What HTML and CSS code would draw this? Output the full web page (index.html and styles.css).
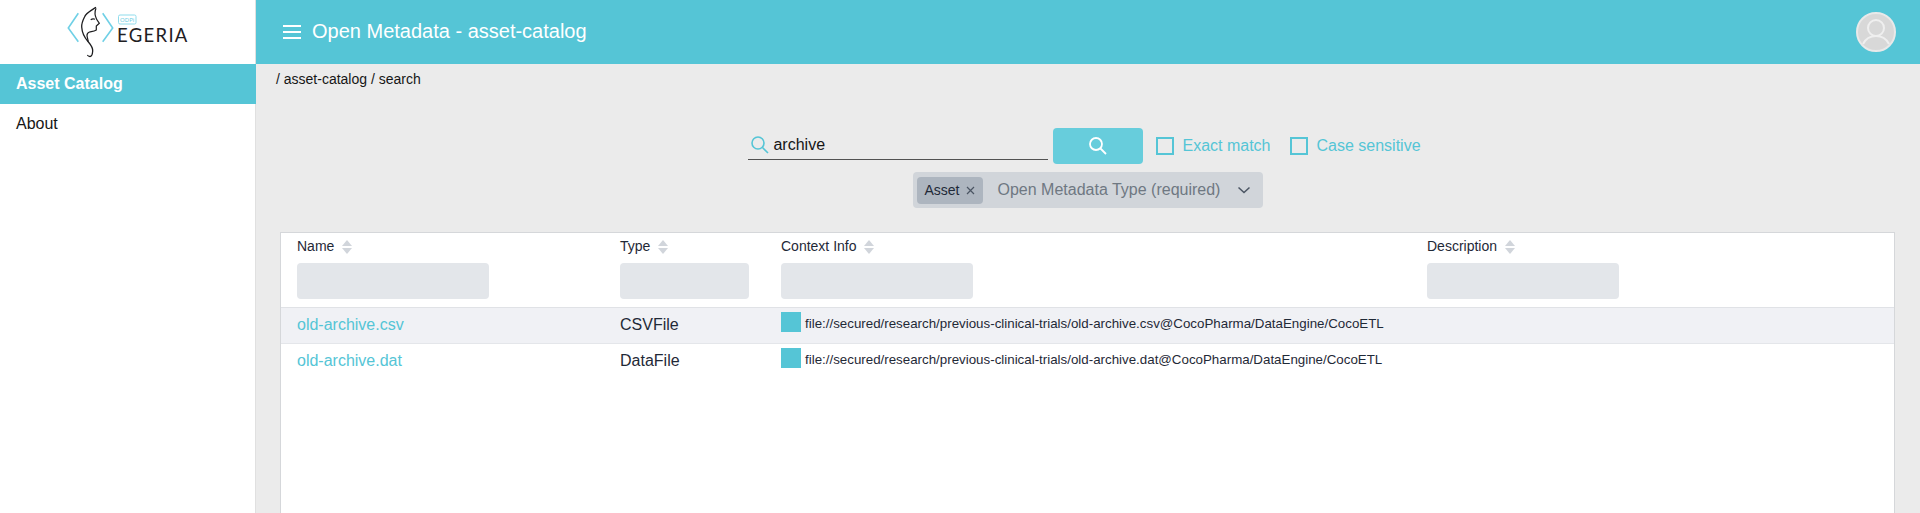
FILE: index.html
```html
<!DOCTYPE html>
<html lang="en">
<head>
    <meta charset="UTF-8">
    <meta name="viewport" content="width=device-width, initial-scale=1.0">
    <title>Open Metadata - asset-catalog</title>
    <link rel="stylesheet" href="styles.css">
</head>
<body>
    <aside class="sidebar">
        <div class="logo">
            <svg class="logo-mark" width="160" height="64" viewBox="0 0 160 64">
                <path d="M28.300 13.300 L18.300 28 L28.300 41.700 M52.700 13.300 L62.700 28 L52.700 41.700" fill="none" stroke="#6fd0e6" stroke-width="1.600"/>
                <path d="M46 7.300 C40 11 36 13 34.500 17 C32.500 21 31.500 24 31.700 27 C32 32 34 37 38 41.500 C41 45 43 48 42.700 51 C42.500 54 41.500 56.500 40 56.500 C39 56.500 38 56 37.300 55" fill="none" stroke="#1d1d1f" stroke-width="1.300"/>
                <path d="M46 8.300 C44.500 12 45 16 46.500 19 C47.500 21 49 22.500 49.300 23.300 L46.300 26 L46.300 30 C44 31.500 41.500 31.500 39.500 32 C37.500 32.700 36.800 34 37 36 L38.300 41.700" fill="none" stroke="#1d1d1f" stroke-width="1.200"/>
                <path d="M40.700 19.800 C42 18.800 44 18.800 45 19.300" fill="none" stroke="#1d1d1f" stroke-width="1.100"/>
                <rect x="68.500" y="15" width="17.500" height="9" rx="1.500" fill="none" stroke="#8fdcec"/>
                <text x="77.200" y="21.700" class="logo-odpi" text-anchor="middle">ODPi</text>
                <text x="67" y="42" class="logo-name">EGERIA</text>
            </svg>
        </div>
        <a class="nav-item active">Asset Catalog</a>
        <a class="nav-item">About</a>
    </aside>

    <div class="content">
        <header class="topbar">
            <span class="burger"><i></i><i></i><i></i></span>
            <span class="topbar-title">Open Metadata - asset-catalog</span>
            <svg class="avatar" width="40" height="40" viewBox="0 0 40 40">
                <circle cx="20" cy="20" r="19" fill="#d8d8d8" stroke="#e9e9e9" stroke-width="2"/>
                <circle cx="20" cy="16" r="8" fill="none" stroke="#efefef" stroke-width="2"/>
                <path d="M7 32 C10 26 15 24 20 24 C25 24 30 26 33 32" fill="none" stroke="#efefef" stroke-width="2"/>
            </svg>
        </header>

        <main class="main">
            <div class="breadcrumb">/ asset-catalog / search</div>

            <div class="search-row">
                <div class="search-field">
                    <svg width="20" height="20" viewBox="0 0 20 20"><circle cx="8" cy="8" r="6" fill="none" stroke="#55c5d6" stroke-width="1.600"/><path d="M12.500 12.500 L18 18" stroke="#55c5d6" stroke-width="1.600"/></svg>
                    <span>archive</span>
                </div>
                <button class="search-btn">
                    <svg width="20" height="20" viewBox="0 0 20 20"><circle cx="8" cy="8" r="6" fill="none" stroke="#fff" stroke-width="1.800"/><path d="M12.500 12.500 L18 18" stroke="#fff" stroke-width="1.800"/></svg>
                </button>
                <label class="check"><i></i>Exact match</label>
                <label class="check last"><i></i>Case sensitive</label>
            </div>

            <div class="type-select">
                <span class="chip">Asset
                    <svg width="9" height="9" viewBox="0 0 9 9"><path d="M1 1 L8 8 M8 1 L1 8" stroke="#4b5563" stroke-width="1.200"/></svg>
                </span>
                <span class="placeholder">Open Metadata Type (required)</span>
                <svg width="14" height="8" viewBox="0 0 14 8"><path d="M1.500 1.500 L7 6.500 L12.500 1.500" fill="none" stroke="#4b5563" stroke-width="1.500"/></svg>
            </div>

            <section class="table">
                <div class="row head">
                    <div class="cell">
                        <span class="th">Name <em class="sort"></em></span>
                        <div class="filter"></div>
                    </div>
                    <div class="cell">
                        <span class="th">Type <em class="sort"></em></span>
                        <div class="filter short"></div>
                    </div>
                    <div class="cell">
                        <span class="th">Context Info <em class="sort"></em></span>
                        <div class="filter"></div>
                    </div>
                    <div class="cell">
                        <span class="th">Description <em class="sort"></em></span>
                        <div class="filter"></div>
                    </div>
                </div>
                <div class="row body odd">
                    <div class="cell"><a class="link">old-archive.csv</a></div>
                    <div class="cell">CSVFile</div>
                    <div class="cell context"><i class="swatch"></i><span>file://secured/research/previous-clinical-trials/old-archive.csv@CocoPharma/DataEngine/CocoETL</span></div>
                    <div class="cell"></div>
                </div>
                <div class="row body">
                    <div class="cell"><a class="link">old-archive.dat</a></div>
                    <div class="cell">DataFile</div>
                    <div class="cell context"><i class="swatch"></i><span>file://secured/research/previous-clinical-trials/old-archive.dat@CocoPharma/DataEngine/CocoETL</span></div>
                    <div class="cell"></div>
                </div>
            </section>
        </main>
    </div>
</body>
</html>
```

FILE: styles.css
```css
html, body {
    height: 100%;
}
body {
    font-family: 'Liberation Sans', Arial, sans-serif;
    margin: 0;
    display: flex;
    overflow: hidden;
    background: #ebebeb;
    color: #161616;
}

/* sidebar */
.sidebar {
    width: 256px;
    flex-shrink: 0;
    background: white;
    border-right: 1px solid #e0e0e0;
    box-sizing: border-box;
}
.logo {
    height: 64px;
}
.logo-mark {
    display: block;
    margin-left: 50px;
}
.logo-odpi {
    font-family: 'Open Sans', sans-serif;
    font-size: 6px;
    fill: #5fcbe2;
}
.logo-name {
    font-family: 'Lato', sans-serif;
    font-size: 18.5px;
    fill: #1f2023;
    letter-spacing: 1.3px;
}
.nav-item {
    display: block;
    height: 40px;
    line-height: 40px;
    padding-left: 16px;
    font-size: 16px;
}
.nav-item.active {
    background: #55c5d6;
    color: white;
    font-weight: bold;
    margin-right: -1px;
}

/* top bar */
.content {
    flex: 1;
    display: flex;
    flex-direction: column;
    min-width: 0;
}
.topbar {
    height: 64px;
    flex-shrink: 0;
    background: #55c5d6;
    color: white;
    display: flex;
    align-items: center;
    padding: 0 24px 0 27px;
}
.burger {
    display: flex;
    flex-direction: column;
    gap: 4px;
    margin-right: 11px;
}
.burger i {
    display: block;
    width: 18px;
    height: 2px;
    background: white;
}
.topbar-title {
    font-size: 20px;
    flex: 1;
    padding-bottom: 1px;
}
.avatar {
    display: block;
}

/* search */
.main {
    padding: 0 25px 0 24px;
    flex: 1;
    min-height: 0;
    display: flex;
    flex-direction: column;
}
.breadcrumb {
    font-size: 14px;
    padding-top: 7px;
    margin-left: -4px;
    height: 64px;
    box-sizing: border-box;
}
.search-row {
    display: flex;
    align-items: center;
    justify-content: center;
    padding-right: 6px;
    height: 36px;
}
.search-field {
    width: 300px;
    height: 32px;
    align-self: flex-start;
    border-bottom: 1px solid #525252;
    box-sizing: border-box;
    display: flex;
    align-items: center;
    gap: 3px;
    font-size: 16px;
    padding: 2px 0 0 2px;
}
.search-btn {
    width: 90px;
    height: 36px;
    margin-left: 5px;
    border: none;
    border-radius: 4px;
    background: #67cddc;
    display: flex;
    align-items: center;
    justify-content: center;
}
.check {
    display: flex;
    align-items: center;
    color: #55c5d6;
    font-size: 16px;
    margin-left: 13px;
}
.check.last {
    margin-left: 20px;
}
.check i {
    width: 18px;
    height: 18px;
    box-sizing: border-box;
    border: 2px solid #55c5d6;
    margin-right: 8px;
}
.type-select {
    width: 350px;
    height: 36px;
    margin: 8px auto 0;
    background: #d1d5da;
    border-radius: 4px;
    display: flex;
    align-items: center;
    padding: 0 12px 0 4px;
    box-sizing: border-box;
    font-size: 16px;
}
.chip {
    background: #adb5bf;
    color: #1f2937;
    font-size: 14px;
    height: 27px;
    width: 66px;
    box-sizing: border-box;
    display: flex;
    align-items: center;
    gap: 6px;
    border-radius: 4px;
    padding-left: 8px;
    margin-right: 15px;
}
.placeholder {
    color: #6f7882;
    flex: 1;
}

/* table */
.table {
    margin-top: 24px;
    flex: 1;
    background: white;
    border: 1px solid #d5d7da;
    border-bottom: none;
    color: #1f2937;
}
.row {
    display: grid;
    grid-template-columns: 323px 161px 646px 1fr;
}
.cell {
    padding-left: 16px;
}
.head {
    height: 75px;
    border-bottom: 1px solid #e0e2e6;
    box-sizing: border-box;
    font-size: 14px;
}
.th {
    display: block;
    height: 30px;
    line-height: 26px;
    white-space: nowrap;
}
.sort {
    display: inline-block;
    width: 10px;
    height: 14px;
    margin-left: 4px;
    vertical-align: -3px;
    position: relative;
}
.sort::before, .sort::after {
    content: "";
    position: absolute;
    left: 0;
    border-left: 5px solid transparent;
    border-right: 5px solid transparent;
}
.sort::before {
    top: 0;
    border-bottom: 6px solid #d1d5db;
}
.sort::after {
    bottom: 0;
    border-top: 6px solid #d1d5db;
}
.filter {
    width: 192px;
    height: 36px;
    background: #e3e6ea;
    border-radius: 4px;
}
.filter.short {
    width: 129px;
}
.body {
    height: 36px;
    line-height: 34px;
    font-size: 16px;
    border-bottom: 1px solid #e4e6ea;
    box-sizing: border-box;
}
.body:last-child {
    border-bottom: none;
}
.odd {
    background: #f0f1f5;
}
.link {
    color: #55c5d6;
}
.context {
    display: flex;
    align-items: flex-start;
    font-size: 13.33px;
    line-height: 31px;
    white-space: nowrap;
}
.swatch {
    width: 20px;
    height: 20px;
    background: #55c5d6;
    margin: 4px 4px 0 0;
    flex-shrink: 0;
}
```
